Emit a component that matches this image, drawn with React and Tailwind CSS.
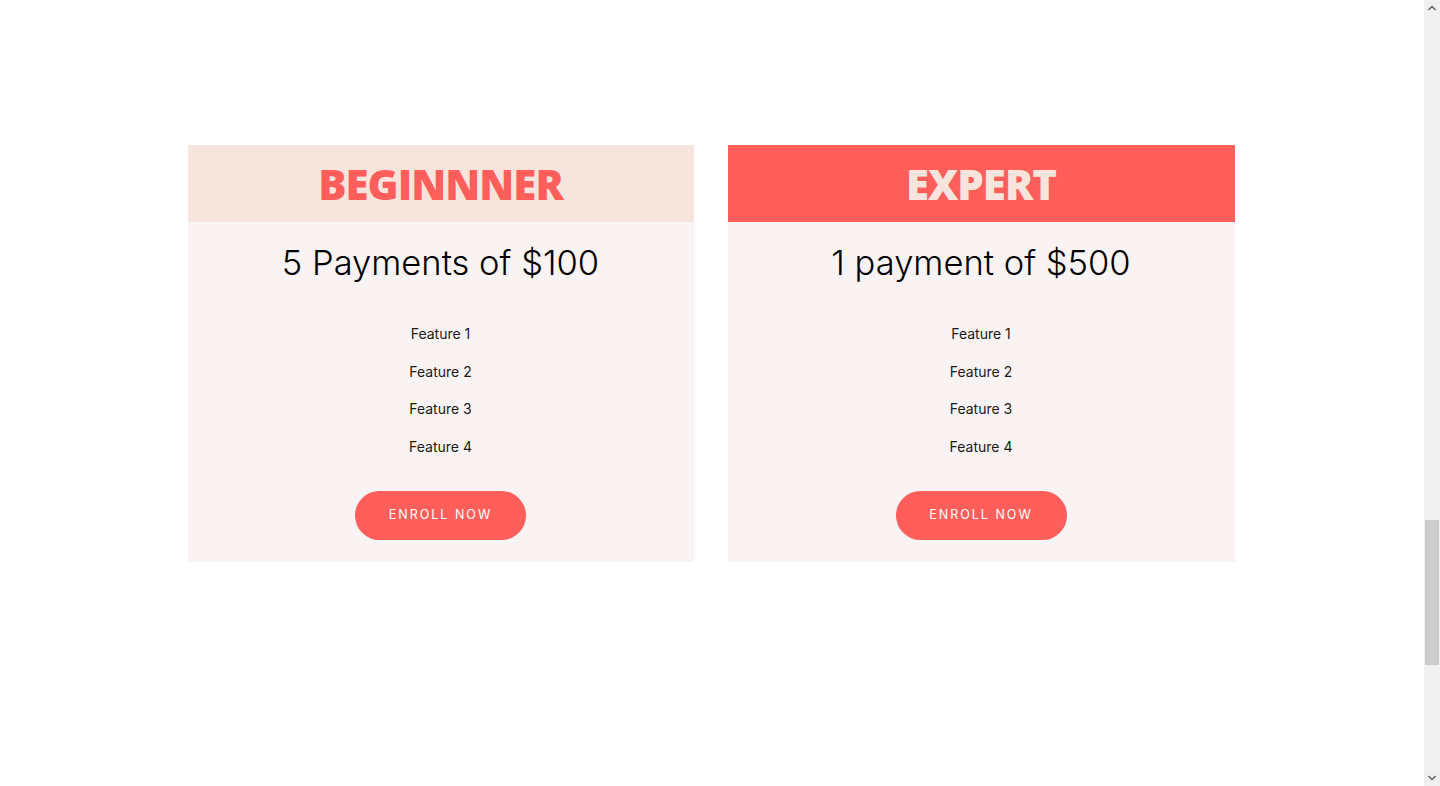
import React from 'react';

const plans = [
    {
        name: 'BEGINNNER',
        price: '5 Payments of $100',
        head: 'bg-[#f7e4dc] text-[#ff5e5b]',
        width: 'w-[506px]',
    },
    {
        name: 'EXPERT',
        price: '1 payment of $500',
        head: 'bg-[#ff5e5b] text-[#f7e4dc]',
        width: 'w-[507px]',
    },
];

const features = ['Feature 1', 'Feature 2', 'Feature 3', 'Feature 4'];

const PlanCard = ({ plan }) => (
    <div className={`${plan.width} bg-[#f9f3f3] flex flex-col`}>
        <div className={`h-[77px] flex items-center justify-center ${plan.head}`}>
            <h2 className="text-[42px] font-extrabold tracking-[-1px] leading-none font-['Open_Sans',sans-serif]">
                {plan.name}
            </h2>
        </div>
        <div className="flex flex-col items-center pt-[20px] pb-[22px]">
            <p className="text-[34.5px] font-light text-black leading-[42px] font-['Inter',sans-serif]">
                {plan.price}
            </p>
            <ul className="mt-[39px] flex flex-col items-center gap-[15.5px]">
                {features.map((f) => (
                    <li key={f} className="text-[14px] leading-[22px] text-[#1a1a1a] font-['Inter',sans-serif]">
                        {f}
                    </li>
                ))}
            </ul>
            <button className="mt-[33px] w-[171px] h-[49px] rounded-full bg-[#ff5e5b] text-white text-[12.5px] tracking-[2px] font-['Inter',sans-serif]">
                ENROLL NOW
            </button>
        </div>
    </div>
);

export default function App() {
    return (
        <div className="h-screen w-full flex bg-white overflow-hidden">
            <main className="flex-1 flex justify-center items-start pt-[145px] pr-[2px] gap-[34px]">
                {plans.map((p) => (
                    <PlanCard key={p.name} plan={p} />
                ))}
            </main>
            {/* fake scrollbar to match the screenshot */}
            <div className="w-[16px] bg-[#f0f0f0] flex flex-col items-center justify-between">
                <svg width="16" height="16" viewBox="0 0 16 16">
                    <path d="M4.5 10 L8 6.5 L11.5 10" fill="none" stroke="#606060" strokeWidth="1.5" />
                </svg>
                <div className="flex-1 w-full flex flex-col pt-[504px] pb-[105px]">
                    <div className="flex-1 mx-[1px] bg-[#cdcdcd]" />
                </div>
                <svg width="16" height="16" viewBox="0 0 16 16">
                    <path d="M4.5 6 L8 9.5 L11.5 6" fill="none" stroke="#606060" strokeWidth="1.5" />
                </svg>
            </div>
        </div>
    );
}
